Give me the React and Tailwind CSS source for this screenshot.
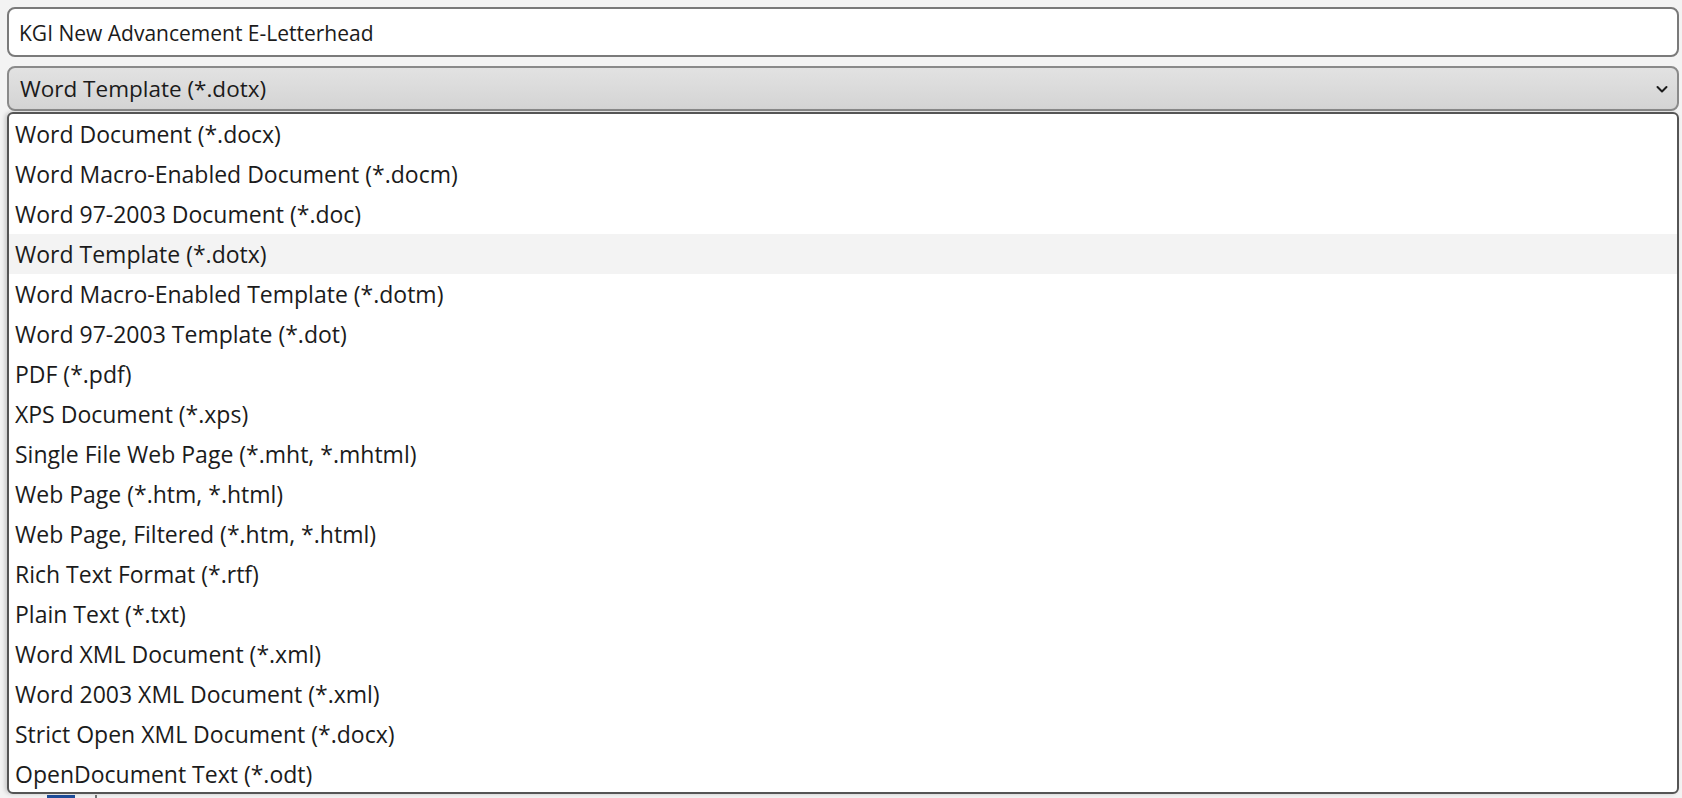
import React from 'react';

const formats = [
  'Word Document (*.docx)',
  'Word Macro-Enabled Document (*.docm)',
  'Word 97-2003 Document (*.doc)',
  'Word Template (*.dotx)',
  'Word Macro-Enabled Template (*.dotm)',
  'Word 97-2003 Template (*.dot)',
  'PDF (*.pdf)',
  'XPS Document (*.xps)',
  'Single File Web Page (*.mht, *.mhtml)',
  'Web Page (*.htm, *.html)',
  'Web Page, Filtered (*.htm, *.html)',
  'Rich Text Format (*.rtf)',
  'Plain Text (*.txt)',
  'Word XML Document (*.xml)',
  'Word 2003 XML Document (*.xml)',
  'Strict Open XML Document (*.docx)',
  'OpenDocument Text (*.odt)',
];

const selected = 'Word Template (*.dotx)';

const App = () => {
  return (
    <div
      className="relative h-screen w-full overflow-hidden bg-[#f3f3f3] text-[#1b1b1b]"
      style={{ fontFamily: '"Open Sans", "Noto Sans", sans-serif' }}
    >
      <div className="flex flex-col gap-[9px] pl-[7px] pr-[3px] pt-[7px]">
        {/* file name */}
        <div className="flex h-[50px] items-center rounded-[8px] border-2 border-[#7a7a7a] bg-white px-[10px] pt-[3px]">
          <span className="text-[21px]">KGI New Advancement E-Letterhead</span>
        </div>

        {/* save as type */}
        <div className="flex h-[45px] items-center justify-between rounded-[8px] border-2 border-[#8a8a8a] bg-gradient-to-b from-[#e2e2e2] to-[#d4d4d4] pl-[11px] pr-[8px]">
          <span className="text-[22.5px]">{selected}</span>
          <svg width="14" height="14" viewBox="0 0 14 14" fill="none">
            <path d="M2.5 5l4.5 4.5L11.5 5" stroke="#1b1b1b" strokeWidth="2" strokeLinecap="round" strokeLinejoin="round" />
          </svg>
        </div>
      </div>

      {/* content behind the list */}
      <div className="flex items-start gap-[20px] pl-[47px] pt-[684px]">
        <div className="h-[26px] w-[28px] bg-[#1f4e9c]" />
        <div className="h-[26px] w-[2px] bg-[#777]" />
        <span className="text-[24px] leading-[26px]">KGI New Advancement E-letterhead</span>
      </div>

      {/* dropdown list */}
      <div className="absolute left-[7px] right-[3px] top-[112px] h-[682px] overflow-hidden rounded-[6px] border-2 border-[#555] bg-white shadow-[-2px_0_4px_rgba(0,0,0,0.18)]">
        <ul>
          {formats.map((f) => (
            <li
              key={f}
              className={`flex h-[40px] items-center pl-[6px] text-[23px] ${f === selected ? 'bg-[#f3f3f3]' : ''}`}
            >
              {f}
            </li>
          ))}
        </ul>
      </div>
    </div>
  );
};

export default App;
